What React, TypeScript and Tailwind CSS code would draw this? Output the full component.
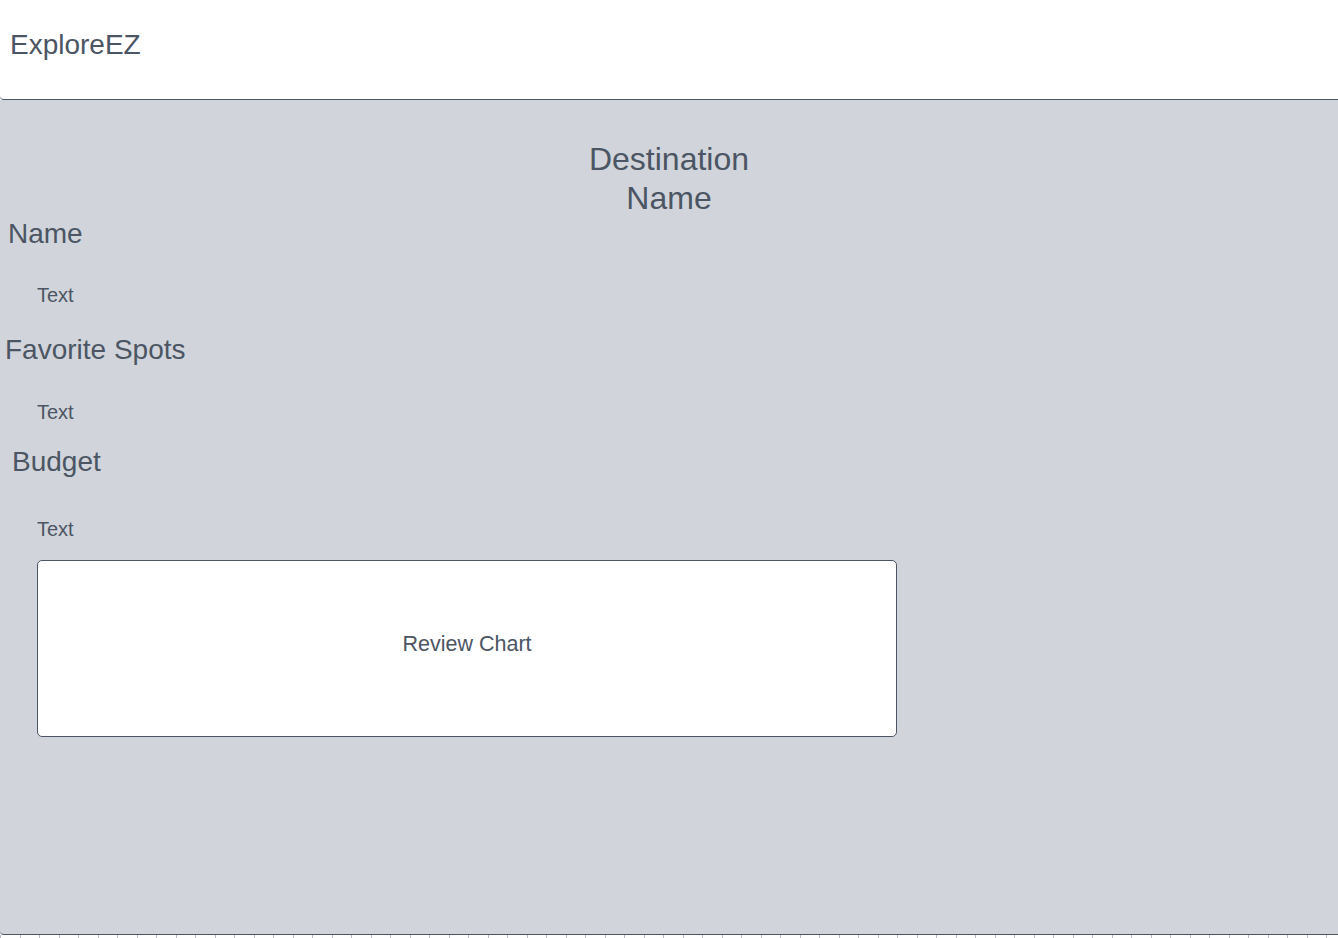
const sections = [
  { title: "Name", offset: "ml-[8px]", gapTop: "mt-0", textGap: "mt-[31px]" },
  { title: "Favorite Spots", offset: "ml-[5px]", gapTop: "mt-[25px]", textGap: "mt-[32px]" },
  { title: "Budget", offset: "ml-[12px]", gapTop: "mt-[20px]", textGap: "mt-[37px]" },
]

export default function App() {
  return (
    <div className="min-h-screen bg-white font-['Liberation_Sans',Arial,sans-serif] text-[#4b5563]">
      {/* Header */}
      <header className="h-[100px] bg-white border-b border-[#4b5563] rounded-bl-[4px] px-[10px] pt-[29px]">
        <h1 className="text-[28px] leading-[32px]">ExploreEZ</h1>
      </header>

      {/* Destination details */}
      <main className="h-[835px] bg-[#d1d5db] border-b border-[#4b5563] rounded-bl-[4px] pt-[40px]">
        <h2 className="mx-auto w-[220px] text-center text-[32px] leading-[39px]">
          Destination Name
        </h2>

        {sections.map((s) => (
          <section key={s.title}>
            <h3 className={`${s.offset} ${s.gapTop} text-[28px] leading-[32px]`}>{s.title}</h3>
            <p className={`${s.textGap} ml-[37px] text-[20px] leading-[28px]`}>Text</p>
          </section>
        ))}

        <div className="mt-[17px] ml-[37px] w-[860px] h-[177px] bg-white border border-[#4b5563] rounded-[5px] flex items-center justify-center pb-[9px]">
          <span className="text-[21.5px] leading-[28px]">Review Chart</span>
        </div>
      </main>

      {/* Next row peeking in */}
      <div className="flex h-[3px] overflow-hidden">
        {Array.from({ length: 70 }).map((_, i) => (
          <span key={i} className="shrink-0 w-[19.5px] h-[3px] border-l border-[#b8bcc4]" />
        ))}
      </div>
    </div>
  )
}
